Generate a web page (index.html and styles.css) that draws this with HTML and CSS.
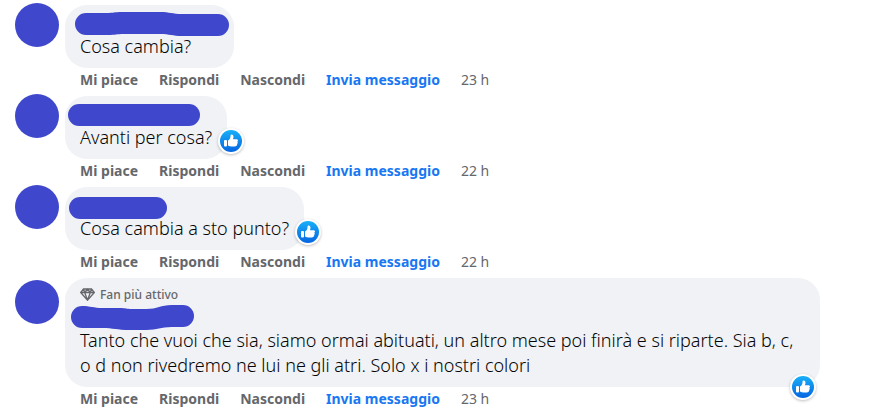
FILE: index.html
```html
<!DOCTYPE html>
<html lang="it">
  <head>
    <meta charset="UTF-8" />
    <meta name="viewport" content="width=device-width, initial-scale=1.0" />
    <title>Commenti</title>
    <link rel="stylesheet" href="styles.css">
  </head>
  <body>
    <svg class="defs" aria-hidden="true">
      <defs>
        <linearGradient id="likeBlue" x1="0" y1="0" x2="0" y2="1">
          <stop offset="0" stop-color="#18aff8" />
          <stop offset="1" stop-color="#0565e0" />
        </linearGradient>
        <symbol id="like" viewBox="0 0 22 22">
          <circle cx="11" cy="11" r="11" fill="url(#likeBlue)" />
          <rect x="4" y="10" width="3" height="6.500" rx="1" fill="#fff" />
          <path fill="#fff" d="M8 10.400c1.700-1 2.500-2.500 2.500-4.500 0-1 .4-1.500 1.100-1.500 1.400 0 1.900 1.200 1.900 2.300 0 1-.3 1.800-.6 2.500h3.500c1 0 1.600.6 1.600 1.300 0 .6-.3 1-.8 1.200.4.200.6.600.6 1 0 .6-.4 1.100-.9 1.200.2.200.3.500.3.800 0 .6-.4 1-.9 1.100-.3.400-.8.600-1.500.6h-3.300c-1.200 0-2.300-.3-3.500-.9z" />
        </symbol>
      </defs>
    </svg>

    <main class="comments">
      <article class="comment">
        <div class="avatar"></div>
        <div class="body">
          <div class="bubble">
            <svg class="name" width="163" height="23">
              <path d="M18 2H38C46 2 46 1 54 1H92C102 1 104 3 114 3H150A11 11 0 0 1 150 25H114C104 25 102 23 92 23H56C48 23 48 24 40 24H18A11 11 0 0 1 18 2Z" />
            </svg>
            <p class="text">Cosa cambia?</p>
          </div>
          <div class="actions">
            <button type="button">Mi piace</button>
            <button type="button">Rispondi</button>
            <button type="button">Nascondi</button>
            <a class="message" href="#">Invia messaggio</a>
            <a class="time" href="#">23 h</a>
          </div>
        </div>
      </article>

      <article class="comment">
        <div class="avatar"></div>
        <div class="body">
          <div class="bubble">
            <svg class="name" width="133" height="23">
              <rect x="0" y="2" width="132" height="22" rx="11" />
            </svg>
            <p class="text">Avanti per cosa?</p>
            <span class="badge"><svg><use href="#like" /></svg></span>
          </div>
          <div class="actions">
            <button type="button">Mi piace</button>
            <button type="button">Rispondi</button>
            <button type="button">Nascondi</button>
            <a class="message" href="#">Invia messaggio</a>
            <a class="time" href="#">22 h</a>
          </div>
        </div>
      </article>

      <article class="comment">
        <div class="avatar"></div>
        <div class="body">
          <div class="bubble">
            <svg class="name" width="100" height="23">
              <rect x="1" y="4" width="98" height="22" rx="11" />
            </svg>
            <p class="text">Cosa cambia a sto punto?</p>
            <span class="badge"><svg><use href="#like" /></svg></span>
          </div>
          <div class="actions">
            <button type="button">Mi piace</button>
            <button type="button">Rispondi</button>
            <button type="button">Nascondi</button>
            <a class="message" href="#">Invia messaggio</a>
            <a class="time" href="#">22 h</a>
          </div>
        </div>
      </article>

      <article class="comment top-fan">
        <div class="avatar"></div>
        <div class="body">
          <div class="bubble">
            <div class="fan">
              <svg width="15" height="13" viewBox="0 0 15 13">
                <path d="M3.500 1H11.500L14.300 4.500L7.500 12.200L.7 4.500ZM.7 4.500H14.300M3.500 1L4.700 4.500L7.500 12.200L10.300 4.500L11.500 1M4.700 4.500L7.500 1L10.300 4.500" />
              </svg>
              Fan più attivo
            </div>
            <svg class="name" width="130" height="23">
              <path d="M14 1C22 1 26 3 34 3H52C58 3 58 4 64 4H78C90 4 92 0 104 0H115A11 11 0 0 1 115 22H104C92 22 90 25 78 25H62C48 25 46 23 34 23H14A11 11 0 0 1 14 1Z" />
            </svg>
            <p class="text">Tanto che vuoi che sia, siamo ormai abituati, un altro mese poi finirà e si riparte. Sia b, c, o d non rivedremo ne lui ne gli atri. Solo x i nostri colori</p>
            <span class="badge"><svg><use href="#like" /></svg></span>
          </div>
          <div class="actions">
            <button type="button">Mi piace</button>
            <button type="button">Rispondi</button>
            <button type="button">Nascondi</button>
            <a class="message" href="#">Invia messaggio</a>
            <a class="time" href="#">23 h</a>
          </div>
        </div>
      </article>
    </main>
  </body>
</html>
```
FILE: styles.css
```css
body {
  margin: 0;
  background-color: #fff;
  color: #050505;
  font-family: "Segoe UI", "Noto Sans", "Open Sans", sans-serif;
}

.defs {
  position: absolute;
  width: 0;
  height: 0;
}

.comments {
  padding: 5px 51px 0 15px;
}

.comment {
  display: flex;
  gap: 6px;
}

.avatar {
  flex: none;
  width: 44px;
  height: 44px;
  margin-top: -2px;
  border-radius: 50%;
  background-color: #3f48cc;
}
.top-fan .avatar {
  margin-top: 2px;
}

.body {
  min-width: 0;
}

/* Comment bubble */
.bubble {
  position: relative;
  width: fit-content;
  padding: 6px 15px 9px;
  border-radius: 22px;
  background-color: #f0f2f5;
}
.name {
  display: block;
  margin: 0 -12px;
  overflow: visible;
  fill: #3f48cc;
}
.text {
  margin: 0;
  font-size: 18px;
  font-weight: 350;
  line-height: 25px;
}

.fan {
  display: flex;
  align-items: center;
  gap: 5px;
  height: 21px;
  color: #65676b;
  font-size: 12px;
  font-weight: 500;
}
.fan svg {
  fill: none;
  stroke: #65676b;
  stroke-width: 1.3;
}

/* Reaction badge on the edge of the bubble */
.badge {
  position: absolute;
  right: -17px;
  bottom: 5px;
  padding: 2px;
  border-radius: 50%;
  background-color: #fff;
  box-shadow: 0 1px 3px rgba(0, 0, 0, 0.25);
}
.badge svg {
  display: block;
  width: 22px;
  height: 22px;
}
.top-fan .badge {
  right: 4px;
  bottom: -13px;
}

/* Links under the bubble */
.actions {
  display: flex;
  gap: 21px;
  height: 28px;
  padding-left: 15px;
  color: #65676b;
  font-size: 14px;
  line-height: 24px;
}
.actions button {
  padding: 0;
  border: none;
  background: none;
  color: inherit;
  font: inherit;
  font-weight: 700;
  cursor: pointer;
}
.actions button,
.actions a {
  height: 24px;
  text-decoration: none;
}
.actions .message {
  color: #1877f2;
  font-weight: 700;
}
.actions .time {
  color: inherit;
}
.actions button:hover,
.actions a:hover {
  text-decoration: underline;
}
```
